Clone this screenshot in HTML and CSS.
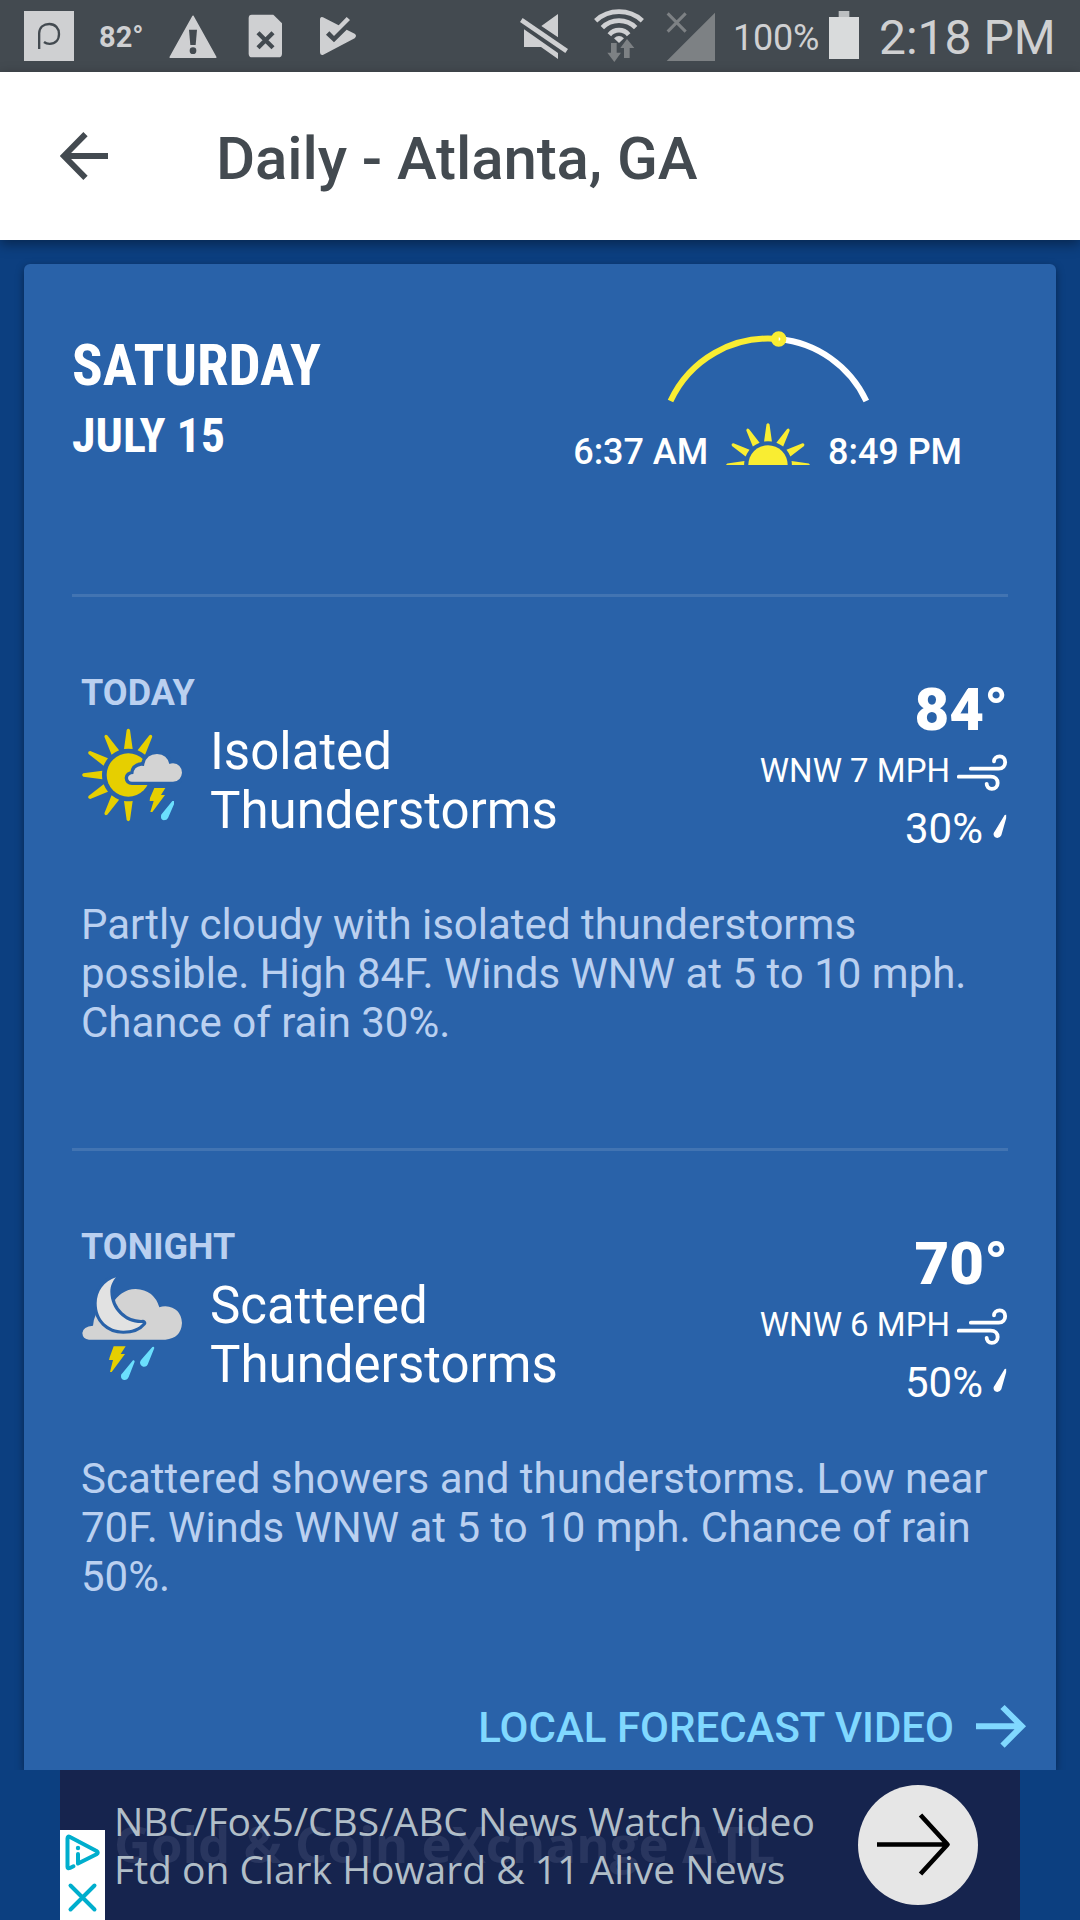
FILE: index.html
```html
<!DOCTYPE html>
<html lang="en">
<head>
<meta charset="utf-8">
<title>Daily - Atlanta, GA</title>
<link rel="stylesheet" href="styles.css">
</head>
<body>
<svg class="defs" width="0" height="0" aria-hidden="true">
  <defs>
    <path id="sun-ray" d="M-13-78 L-5-135 Q0-142 5-135 L13-78 Q0-80-13-78z"/>
    <symbol id="wind" viewBox="711 283 153 111">
      <g fill="none" stroke="#fff" stroke-width="11.5" stroke-linecap="round">
        <path d="M752.500 327 H836 C849 327 855.500 318 855.500 308 C855.500 298 849 290 839 290 C829 290 822 297 822 305"/>
        <path d="M716.500 351 H812 C825 351 833 359 833 370 C833 380 826 387.500 815.500 387.500 C806 387.500 800 381 800 372.500"/>
      </g>
    </symbol>
    <symbol id="drop" viewBox="816 462 48 75">
      <path fill="#fff" d="M854 465 L858.500 464 V475 L844 526 Q840 534 832 534 Q821 533 820.500 522 Q821 517 825 513z"/>
    </symbol>
  </defs>
</svg>

<div class="status-bar">
  <div class="status-group">
    <svg class="w50" viewBox="72 0 150 216"><path fill="#cfd0d2" d="M72 33h150v150H72z"/><path fill="none" stroke="#434a50" stroke-width="7" d="M117.500 147 V100 C118 82 131 72 148 72 C166 72 177 85 177 102 C177 120 166 131.500 149 131.500 C142 131.500 137 130 132 126"/></svg>
    <span class="status-temp">82°</span>
    <svg class="warn" viewBox="507 0 144 216"><path fill="#cfd0d2" stroke="#cfd0d2" stroke-width="5" stroke-linejoin="round" d="M579 49 L647 171.500 H511z"/><path fill="#434a50" d="M567 89h24l-4 46h-16z"/><circle cx="579" cy="152" r="10" fill="#434a50"/></svg>
    <svg class="sim" viewBox="744 0 105 216"><path fill="#cfd0d2" d="M755 44 H820 L846 70 V161 Q846 172 835 172 H757 Q746 172 746 161 V54 Q746 44 755 44z"/><path stroke="#434a50" stroke-width="13" d="M774 98 L819 143 M819 98 L774 143"/></svg>
    <svg class="play" viewBox="957 0 114 216"><path fill="#cfd0d2" d="M960 60 Q960 49 969 52 L1016 76 L1040 51 L1050 60 L1002 108 L988 94 L978 104 L1002 127 L1040 89 L1064 101 Q1072 107 1064 115 L970 164 Q960 167 960 157z"/></svg>
  </div>
  <div class="status-group">
    <svg class="mute" viewBox="60 0 144 216"><path fill="#cfd0d2" d="M174 42 V112 L124 78z M72 88 L174 159 V177 L123 141 H72z"/><path stroke="#cfd0d2" stroke-width="14" d="M64 60 L200 153"/></svg>
    <svg class="w50 wifi" viewBox="282 0 150 216"><g fill="none" stroke="#cfd0d2" stroke-width="14"><path d="M287 62 A104 104 0 0 1 427 62"/><path d="M307 83 A70 70 0 0 1 407 83"/><path d="M328 104 A38 38 0 0 1 386 104"/></g><path fill="#cfd0d2" d="M342 115 Q357 101 372 115 L357 129z"/><path fill="#7d8184" d="M333 129h17v29h13l-20 28l-21-28h11z M372 174v-30h-11l20-27l22 27h-14v30z"/></svg>
    <svg class="w50 signal" viewBox="498 0 150 216"><path fill="#7d8184" d="M645 38 V183 H500z"/><path stroke="#7d8184" stroke-width="9" d="M503 40 L557 95 M557 40 L503 95"/></svg>
    <span class="status-pct">100%</span>
    <svg class="battery" viewBox="987 0 90 216"><path fill="#bcbfc1" d="M1016 33h32v20h-32z"/><path fill="#d9dbdc" d="M987 51h90v126h-90z"/></svg>
    <span class="status-time">2:18 PM</span>
  </div>
</div>

<header class="app-bar">
  <svg class="back" viewBox="0 0 48 48"><path d="M5 24 H48 M25.500 2.200 L4 24 L25.500 45.800"/></svg>
  <h1 class="title">Daily - Atlanta, GA</h1>
</header>

<main class="content">
  <article class="card">
    <section class="day">
      <div class="day-name">
        <h2 class="weekday">SATURDAY</h2>
        <p class="date">JULY 15</p>
      </div>
      <div class="sun-times">
        <svg class="arc" viewBox="0 0 220 80">
          <g fill="none" stroke-width="6">
            <path stroke="#fff" d="M120.700 14 A108 108 0 0 1 208.300 76"/>
            <path stroke="#f9ed32" d="M12.500 76 A108 108 0 0 1 120.700 14"/>
          </g>
          <circle cx="120.700" cy="14" r="4.700" fill="#fff" stroke="#f9ed32" stroke-width="6"/>
          <path fill="#f9ed32" d="M118 11h2.700v6H118z"/>
        </svg>
        <div class="times">
          <span>6:37 AM</span>
          <svg class="half-sun" viewBox="0 0 86 44" fill="#f9ed32">
            <circle cx="43" cy="44" r="19.700"/>
            <g transform="translate(43 44) scale(.302)">
              <use href="#sun-ray"/><use href="#sun-ray" transform="rotate(30)"/><use href="#sun-ray" transform="rotate(60)"/><use href="#sun-ray" transform="rotate(90)"/>
              <use href="#sun-ray" transform="rotate(-30)"/><use href="#sun-ray" transform="rotate(-60)"/><use href="#sun-ray" transform="rotate(-90)"/>
            </g>
          </svg>
          <span>8:49 PM</span>
        </div>
      </div>
    </section>

    <section class="period">
      <div class="summary">
        <div class="condition">
          <h3 class="label">TODAY</h3>
          <div class="phrase-row">
            <svg class="weather" viewBox="63 186 303 315">
              <g fill="#e6cf00">
                <circle cx="205" cy="345" r="65"/>
                <g transform="translate(205 345)">
                  <use href="#sun-ray"/><use href="#sun-ray" transform="rotate(30)"/><use href="#sun-ray" transform="rotate(-30)"/><use href="#sun-ray" transform="rotate(-60)"/>
                  <use href="#sun-ray" transform="rotate(-90)"/><use href="#sun-ray" transform="rotate(-120)"/><use href="#sun-ray" transform="rotate(-150)"/><use href="#sun-ray" transform="rotate(180)"/>
                </g>
              </g>
              <path fill="#d3d3d3" stroke="#2962a9" stroke-width="20" paint-order="stroke" stroke-linejoin="round" d="M216 365 Q205 365 204 354 Q205 343 220 342 Q221 320 244 317 Q249 317 252 318 Q257 282 291 282 Q322 284 328 312 Q333 310 339 310 Q364 312 366 338 Q364 363 339 365z"/>
              <path fill="#e6cf00" d="M283 384 H316 L303 405 H315 L277 456 H271 L281 423 H269 L270 414z"/>
              <path fill="#6bdffd" d="M337 423 H342 V433 L324 474 Q321 481 311 481 Q302 479 303 468 Q303 463 307 460z"/>
            </svg>
            <p class="phrase">Isolated<br>Thunderstorms</p>
          </div>
        </div>
        <div class="readings">
          <span class="temp">84°</span>
          <div class="wind-row"><span>WNW 7 MPH</span><svg class="wind-icon"><use href="#wind"/></svg></div>
          <div class="rain-row"><span>30%</span><svg class="drop-icon"><use href="#drop"/></svg></div>
        </div>
      </div>
      <p class="narrative">Partly cloudy with isolated thunderstorms<br>possible. High 84F. Winds WNW at 5 to 10 mph.<br>Chance of rain 30%.</p>
    </section>

    <section class="period">
      <div class="summary">
        <div class="condition">
          <h3 class="label">TONIGHT</h3>
          <div class="phrase-row">
            <svg class="weather" viewBox="63 168 303 315">
              <path fill="#d3d3d3" d="M87 359 Q68 357 67 339 Q69 319 99 317 Q100 300 108 282 L155 255 Q181 208 227 207 Q282 209 298 262 Q306 259 316 259 Q363 263 366 309 Q363 355 316 359z"/>
              <path fill="#e2e2e2" stroke="#2962a9" stroke-width="19" paint-order="stroke" stroke-linejoin="round" d="M168 172 C132 183 110 215 110 250 C110 300 145 332 190 332 C214 332 236 325 249 309 C196 312 152 270 151 215 C151 197 159 182 168 172z"/>
              <path fill="#e6cf00" d="M161 379 H197 L182 402 H195 L155 456 H150 L159 420 H147 L149 412z"/>
              <path fill="#6bdffd" d="M277 381 Q282 378 283 384 L264 431 Q261 441 250 440 Q240 437 240 427 Q241 422 245 418z M219 421 Q224 419 224 425 L206 471 Q202 481 192 480 Q182 477 183 467 Q183 463 187 460z"/>
            </svg>
            <p class="phrase">Scattered<br>Thunderstorms</p>
          </div>
        </div>
        <div class="readings">
          <span class="temp">70°</span>
          <div class="wind-row"><span>WNW 6 MPH</span><svg class="wind-icon"><use href="#wind"/></svg></div>
          <div class="rain-row"><span>50%</span><svg class="drop-icon"><use href="#drop"/></svg></div>
        </div>
      </div>
      <p class="narrative">Scattered showers and thunderstorms. Low near<br>70F. Winds WNW at 5 to 10 mph. Chance of rain<br>50%.</p>
    </section>

    <div class="video-link">
      <span>LOCAL FORECAST VIDEO</span>
      <svg class="link-arrow" viewBox="0 0 54 48"><path d="M2 24.300 H47 M28.500 5 L47.800 24.300 L28.500 43.600"/></svg>
    </div>
  </article>
</main>

<footer class="ad-strip">
  <div class="ad">
    <span class="ad-ghost">Gold &amp; Coin eXchange ATL</span>
    <p class="ad-text">NBC/Fox5/CBS/ABC News Watch Video<br>Ftd on Clark Howard &amp; 11 Alive News</p>
    <svg class="ad-go" viewBox="0 0 120 120"><circle cx="60" cy="60" r="60" fill="#e6e6e6"/><path fill="none" stroke="#000" stroke-width="4.700" stroke-linejoin="round" d="M19 59.500 H89 M62.500 30 L89.500 59.500 L62.500 89"/></svg>
    <svg class="ad-choices" viewBox="0 0 45 90"><path fill="#fff" d="M0 0h45v90H0z"/><g fill="none" stroke="#00aecd" stroke-width="4" stroke-linecap="round" stroke-linejoin="round"><path d="M13.500 36.300 L10 38 Q7.500 39 7.500 37 V8.500 Q7.500 5.500 10 7 L36.500 21 Q39 22.700 36.500 24.200 L18 33.500 V24"/><path d="M10.500 55.500 L34.500 79.500 M34.500 55.500 L10.500 79.500"/></g><circle cx="18" cy="18" r="2.200" fill="#00aecd"/></svg>
  </div>
</footer>
</body>
</html>
```
FILE: styles.css
```css
* { box-sizing: border-box; }

body {
  margin: 0;
  width: 1080px;
  height: 1920px;
  overflow: hidden;
  display: flex;
  flex-direction: column;
  background: #0c3f80;
  font-family: Roboto, sans-serif;
  color: #fff;
}

h1, h2, h3, p { margin: 0; font-weight: inherit; }
svg { display: block; flex: none; }
.defs { position: absolute; }

/* Status bar */
.status-bar {
  flex: none;
  height: 72px;
  padding: 0 25px 0 24px;
  display: flex;
  justify-content: space-between;
  background: #434a50;
  color: #cfd0d2;
  white-space: nowrap;
}
.status-group { display: flex; align-items: flex-start; }
.status-group svg { height: 72px; }
.w50 { width: 50px; }
.status-temp { width: 45px; margin: 20px 0 0 25px; font: 700 29px/34px Roboto, sans-serif; }
.warn { width: 48px; margin-left: 25px; }
.sim { width: 35px; margin-left: 31px; }
.play { width: 38px; margin-left: 36px; }
.mute { width: 48px; }
.wifi { margin-left: 26px; }
.signal { margin-left: 22px; }
.status-pct { width: 87px; margin: 17px 0 0 17px; font: 400 36px/42px Roboto, sans-serif; letter-spacing: -.2px; }
.battery { width: 30px; margin-left: 9px; }
.status-time { width: 176px; margin: 10px 0 0 20px; font: 400 48px/56px Roboto, sans-serif; }

/* App bar */
.app-bar {
  flex: none;
  position: relative;
  z-index: 2;
  height: 168px;
  padding-left: 60px;
  display: flex;
  align-items: center;
  background: #fff;
  color: #434a50;
  box-shadow: 0 4px 12px rgba(0, 0, 0, .4);
}
.back { width: 48px; height: 48px; fill: none; stroke: #434a50; stroke-width: 6; }
.title { margin-left: 108px; padding-top: 5px; font-size: 60px; line-height: 70px; font-weight: 500; letter-spacing: -.1px; }

/* Forecast card */
.content { flex: 1; min-height: 0; padding: 24px 24px 0; }
.card {
  height: 100%;
  display: flex;
  flex-direction: column;
  background: #2962a9;
  border-radius: 6px 6px 0 0;
  box-shadow: 0 3px 9px rgba(0, 0, 0, .4);
}

.day {
  height: 330px;
  padding: 0 94px 0 48px;
  display: flex;
  justify-content: space-between;
}
.day-name { padding-top: 68px; font-family: "Roboto Condensed", Roboto, sans-serif; font-stretch: 75%; font-weight: 700; }
.weekday { font-size: 57px; line-height: 67px; }
.date { margin-top: 9px; font-size: 48px; line-height: 56px; }

.sun-times { padding-top: 61px; display: flex; flex-direction: column; align-items: center; gap: 16px; }
.arc { width: 220px; height: 80px; }
.times { height: 52px; display: flex; align-items: flex-end; gap: 17px; font-size: 36px; line-height: 42px; font-weight: 500; letter-spacing: -.05px; }
.half-sun { width: 86px; height: 44px; margin-bottom: 8px; }

.period { position: relative; height: 554px; padding: 78px 48px 0 57px; }
.period::before { content: ""; position: absolute; left: 48px; right: 48px; top: 0; height: 3px; background: #4274b2; }
.summary { height: 228px; display: flex; justify-content: space-between; }
.label { font-size: 36px; line-height: 42px; font-weight: 700; color: #bad0f0; }
.phrase-row { margin-top: 8px; display: flex; gap: 28px; }
.weather { width: 101px; height: 105px; }
.phrase { font-size: 51px; line-height: 59px; }
.readings { display: flex; flex-direction: column; align-items: flex-end; padding-top: 3px; }
.temp { font-size: 60px; line-height: 70px; font-weight: 900; }
.wind-row { margin-top: 6px; height: 41px; display: flex; gap: 7px; font-size: 33px; line-height: 39px; }
.wind-icon { width: 51px; height: 37px; margin-top: 3px; }
.rain-row { margin-top: 12px; display: flex; gap: 9px; font-size: 42px; line-height: 49px; }
.drop-icon { width: 16px; height: 25px; margin-top: 10px; }
.narrative { font-size: 42px; line-height: 49px; color: #bad0f0; white-space: nowrap; }

.video-link { margin: 1px 28px 0 0; display: flex; justify-content: flex-end; gap: 20px; font-size: 42px; line-height: 49px; font-weight: 500; color: #80d8ff; }
.link-arrow { width: 54px; height: 48px; margin-top: -1px; fill: none; stroke: #80d8ff; stroke-width: 6; }

/* Ad banner */
.ad-strip { flex: none; position: relative; z-index: 1; height: 150px; padding: 0 60px; background: #0c3f80; }
.ad { position: relative; height: 150px; padding: 15px 42px 0 54px; display: flex; justify-content: space-between; background: #16244e; font-family: "Open Sans", sans-serif; }
.ad-ghost { position: absolute; left: 54px; top: 43px; font-size: 51px; line-height: 60px; font-weight: 700; color: #29365f; white-space: nowrap; }
.ad-text { position: relative; margin-top: 12px; font-size: 39px; line-height: 48px; color: #b1bec8; white-space: nowrap; }
.ad-go { width: 120px; height: 120px; }
.ad-choices { position: absolute; left: 0; bottom: 0; width: 45px; height: 90px; }
```
